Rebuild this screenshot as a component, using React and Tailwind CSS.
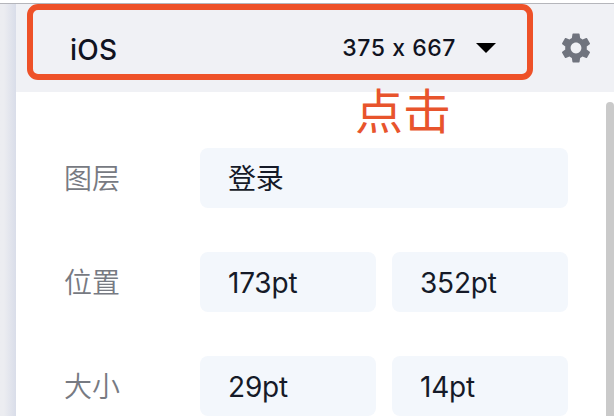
import { MdSettings } from "react-icons/md";

const rows = [
  { label: "图层", values: ["登录"] },
  { label: "位置", values: ["173pt", "352pt"] },
  { label: "大小", values: ["29pt", "14pt"] },
];

function Field({ value }) {
  return (
    <div className="flex h-[60px] flex-1 items-center rounded-lg bg-[#f3f7fc] pt-px pl-7 text-[28px] leading-none font-normal tracking-[-0.2px] text-[#151a28]">
      {value}
    </div>
  );
}

function Header() {
  return (
    <header className="relative flex h-[88px] bg-[#f0f1f5] pl-[11px]">
      <div className="flex h-[76px] w-[506px] items-center rounded-[11px] border-6 border-[#ee5128] pt-[13px] pr-[31px] pl-[37px] font-[450] text-[#10131f]">
        <span className="mt-[3px] text-[28px] leading-none tracking-[0.2px]">iOS</span>
        <span className="mb-px ml-auto text-[23px] leading-none tracking-[0.55px] [font-feature-settings:'calt'_0]">
          375 x 667
        </span>
        <svg className="mb-[2px] ml-5 h-[10px] w-5" viewBox="0 0 20 10">
          <path d="M0 0h20L10 10z" fill="#000" />
        </svg>
      </div>
      <MdSettings className="mt-[26px] ml-[25px] size-9 text-[#70747e]" />
      <span className="absolute top-[84px] left-[339px] text-[48px] leading-none font-normal whitespace-nowrap text-[#e8542c]">
        点击
      </span>
    </header>
  );
}

export default function App() {
  return (
    <div className="flex h-[416px] w-[614px] flex-col overflow-hidden bg-white font-['Inter','Noto_Sans_CJK_SC',sans-serif]">
      <div className="h-[3px] shrink-0 bg-white" />
      <div className="flex min-h-0 flex-1 border-t border-[#b5b6bb]">
        <div className="w-4 shrink-0 bg-linear-to-r from-[#ecedf1] from-25% to-[#d9dde9]" />
        <div className="min-w-0 flex-1">
          <Header />
          <div className="flex h-[324px] justify-between">
            <div className="flex w-[504px] flex-col gap-11 pt-14 pl-12">
              {rows.map((row) => (
                <div key={row.label} className="flex w-[504px] shrink-0 items-center">
                  <span className="w-[136px] shrink-0 pt-0.5 text-[28px] leading-none font-[350] text-[#777a82]">
                    {row.label}
                  </span>
                  <div className="flex flex-1 gap-4">
                    {row.values.map((value) => (
                      <Field key={value} value={value} />
                    ))}
                  </div>
                </div>
              ))}
            </div>
            <div className="mt-[10px] w-2 rounded-t-full bg-[#cacaca]" />
          </div>
        </div>
      </div>
    </div>
  );
}
